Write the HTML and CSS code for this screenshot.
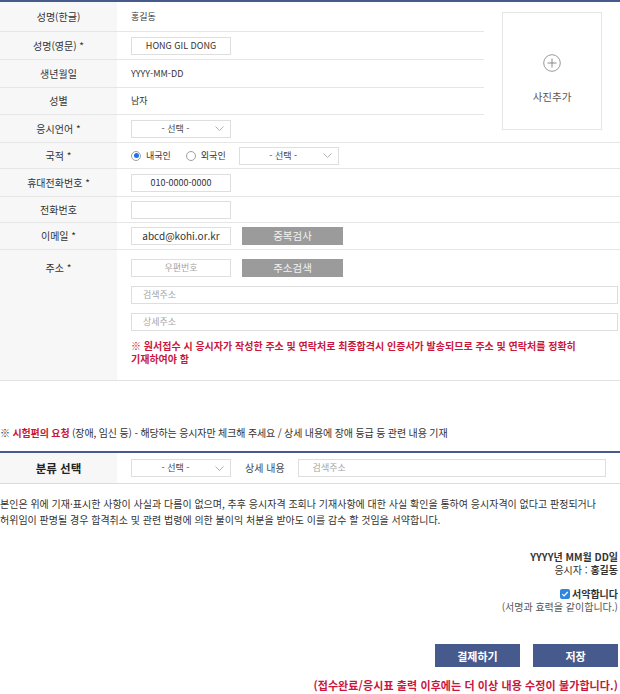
FILE: index.html
```html
<!DOCTYPE html>
<html lang="ko">
<head>
<meta charset="utf-8">
<title>응시원서</title>
<link rel="stylesheet" href="styles.css">
</head>
<body>
<div class="page">
  <div class="form">
    <div class="lb">성명(한글)</div>
    <div class="val">홍길동</div>
    <div class="photo">
      <div class="photo-box">
        <svg class="plus" width="18" height="18" viewBox="0 0 18 18"><circle cx="9" cy="9" r="8.3" fill="none" stroke="#9a9a9a" stroke-width="1"/><path d="M9 4.5v9M4.5 9h9" stroke="#8a8a8a" stroke-width="1" fill="none"/></svg>
        <span class="photo-text">사진추가</span>
      </div>
    </div>

    <div class="lb">성명(영문) *</div>
    <div class="val"><span class="inp">HONG GIL DONG</span></div>

    <div class="lb">생년월일</div>
    <div class="val">YYYY-MM-DD</div>

    <div class="lb">성별</div>
    <div class="val">남자</div>

    <div class="lb">응시언어 *</div>
    <div class="val">
      <span class="sel"><span class="sel-text">- 선택 -</span><svg class="chev" width="9" height="5" viewBox="0 0 9 5"><path d="M0.5 0.5l4 4 4-4" fill="none" stroke="#a8a8a8" stroke-width="0.9"/></svg></span>
    </div>

    <div class="lb">국적 *</div>
    <div class="val wide">
      <span class="radio on"></span><span class="radio-label">내국인</span>
      <span class="radio"></span><span class="radio-label last">외국인</span>
      <span class="sel sel-nat"><span class="sel-text">- 선택 -</span><svg class="chev" width="9" height="5" viewBox="0 0 9 5"><path d="M0.5 0.5l4 4 4-4" fill="none" stroke="#a8a8a8" stroke-width="0.9"/></svg></span>
    </div>

    <div class="lb">휴대전화번호 *</div>
    <div class="val wide"><span class="inp">010-0000-0000</span></div>

    <div class="lb">전화번호</div>
    <div class="val wide"><span class="inp"></span></div>

    <div class="lb">이메일 *</div>
    <div class="val wide"><span class="inp email">abcd@kohi.or.kr</span><span class="gbtn">중복검사</span></div>

    <div class="lb lb-top">주소 *</div>
    <div class="val wide addr">
      <div class="addr-row"><span class="inp ph">우편번호</span><span class="gbtn">주소검색</span></div>
      <span class="inp ph full">검색주소</span>
      <span class="inp ph full">상세주소</span>
      <p class="note">※ 원서접수 시 응시자가 작성한 주소 및 연락처로 최종합격시 인증서가 발송되므로 주소 및 연락처를 정확히<br>기재하여야 함</p>
    </div>
  </div>

  <p class="req">※ <strong class="red">시험편의 요청</strong> (장애, 임신 등) - 해당하는 응시자만 체크해 주세요 / 상세 내용에 장애 등급 등 관련 내용 기재</p>

  <div class="form2">
    <div class="lb2">분류 선택</div>
    <div class="val2">
      <span class="sel"><span class="sel-text">- 선택 -</span><svg class="chev" width="9" height="5" viewBox="0 0 9 5"><path d="M0.5 0.5l4 4 4-4" fill="none" stroke="#a8a8a8" stroke-width="0.9"/></svg></span>
      <span class="detail-label">상세 내용</span>
      <span class="inp ph detail">검색주소</span>
    </div>
  </div>

  <p class="oath">본인은 위에 기재·표시한 사항이 사실과 다름이 없으며, 추후 응시자격 조회나 기재사항에 대한 사실 확인을 통하여 응시자격이 없다고 판정되거나<br>허위임이 판명될 경우 합격취소 및 관련 법령에 의한 불이익 처분을 받아도 이를 감수 할 것임을 서약합니다.</p>

  <div class="sign">
    <p class="date">YYYY년 MM월 DD일</p>
    <p class="who">응시자 : <b>홍길동</b></p>
    <p class="agree"><span class="check"><svg width="8" height="8" viewBox="0 0 8 8"><path d="M1.3 4.2l1.8 1.8 3.6-4" fill="none" stroke="#fff" stroke-width="1.2"/></svg></span><b>서약합니다</b></p>
    <p class="sub">(서명과 효력을 같이합니다.)</p>
  </div>

  <div class="actions">
    <span class="btn">결제하기</span>
    <span class="btn">저장</span>
  </div>
  <p class="warn">(접수완료/응시표 출력 이후에는 더 이상 내용 수정이 불가합니다.)</p>
</div>
</body>
</html>
```
FILE: styles.css
```css
* { box-sizing: border-box; }
html, body { margin: 0; padding: 0; background: #fff; }
body {
  font-family: "Noto Sans CJK KR", "Noto Sans", sans-serif;
  font-size: 10px;
  color: #333;
  line-height: 14px;
}
p { margin: 0; }

.page { width: 620px; }

.form {
  display: grid;
  grid-template-columns: 117px 367px 136px;
  grid-template-rows: 30px 28px 28px 27px 28px 26px 28px 26px 27px 130px;
  border-top: 2px solid #465a8e;
  border-bottom: 1px solid #e2e2e2;
}
.lb {
  grid-column: 1;
  background: #f7f7f7;
  border-bottom: 1px solid #e6e6e6;
  display: flex;
  align-items: center;
  justify-content: center;
  color: #333;
}
.lb-top { align-items: flex-start; padding-top: 11px; border-bottom: 0; }
.val {
  grid-column: 2;
  border-bottom: 1px solid #e6e6e6;
  display: flex;
  align-items: center;
  padding-left: 14px;
  font-size: 9px;
}
.val.wide { grid-column: 2 / 4; }

.photo {
  grid-column: 3;
  grid-row: 1 / span 5;
  border-bottom: 1px solid #e6e6e6;
  padding: 10px 0 0 18px;
}
.photo-box {
  width: 100px;
  height: 118px;
  border: 1px solid #e6e6e6;
  display: flex;
  flex-direction: column;
  align-items: center;
  padding-top: 41px;
}
.plus { display: block; }
.photo-text { margin-top: 18px; font-size: 10.5px; color: #555; }

.inp {
  width: 100px;
  height: 18px;
  border: 1px solid #dedede;
  display: inline-flex;
  align-items: center;
  justify-content: center;
  color: #333;
  background: #fff;
  font-size: 9px;
}
.inp.email { font-size: 10px; }
.inp.ph { color: #a5a5a5; }
.inp.full { width: 487px; justify-content: flex-start; padding-left: 11px; }

.sel {
  width: 100px;
  height: 18px;
  border: 1px solid #dedede;
  display: inline-flex;
  align-items: center;
  padding-left: 4px;
  padding-right: 6px;
  background: #fff;
}
.sel-text { flex: 1; text-align: center; color: #444; font-size: 9px; }
.chev { display: block; }
.sel-nat { margin-left: 13px; }

.radio {
  width: 10px;
  height: 10px;
  border-radius: 50%;
  border: 1px solid #a0a0a0;
  background: #fff;
  display: inline-flex;
  align-items: center;
  justify-content: center;
}
.radio.on::after {
  content: "";
  width: 5px;
  height: 5px;
  border-radius: 50%;
  background: #1a73e8;
}
.radio-label { margin-left: 5px; margin-right: 15px; color: #333; font-size: 9px; }
.radio-label.last { margin-right: 0; }

.gbtn {
  width: 101px;
  height: 18px;
  margin-left: 11px;
  background: #9b9b9b;
  color: #f2f2f2;
  display: inline-flex;
  align-items: center;
  justify-content: center;
  font-size: 10.5px;
}

.addr {
  flex-direction: column;
  align-items: flex-start;
  padding-top: 9px;
  gap: 9px;
  border-bottom: 0;
}
.addr-row { display: flex; }
.note {
  margin-top: -1px;
  color: #c9163c;
  font-weight: bold;
  font-size: 10px;
  line-height: 13px;
}

.req { margin-top: 45px; line-height: 14px; color: #333; letter-spacing: -0.15px; }
.red { color: #c9163c; font-weight: bold; }

.form2 {
  margin-top: 11px;
  display: flex;
  height: 33px;
  border-top: 2px solid #465a8e;
  border-bottom: 1px solid #dcdcdc;
}
.lb2 {
  width: 117px;
  background: #f7f7f7;
  display: flex;
  align-items: center;
  justify-content: center;
  font-weight: bold;
  font-size: 11.5px;
  color: #222;
}
.val2 {
  flex: 1;
  display: flex;
  align-items: center;
  padding-left: 14px;
}
.detail-label { margin-left: 14px; font-size: 10px; color: #444; }
.inp.detail { width: 308px; margin-left: 13px; justify-content: flex-start; padding-left: 14px; }

.oath { margin-top: 12px; line-height: 16px; }

.sign {
  margin-top: 22px;
  padding-right: 2px;
  text-align: right;
  line-height: 13px;
}
.date { font-weight: bold; }
.agree {
  margin-top: 11px;
  display: flex;
  justify-content: flex-end;
  align-items: center;
}
.check {
  width: 10px;
  height: 10px;
  border-radius: 2px;
  background: #2f86de;
  display: inline-flex;
  align-items: center;
  justify-content: center;
  margin-right: 2px;
}
.check svg { display: block; }
.sub { color: #555; }

.actions {
  margin-top: 31px;
  padding-right: 2px;
  display: flex;
  justify-content: flex-end;
  gap: 13px;
}
.btn {
  width: 85px;
  height: 23px;
  background: #465a8e;
  color: #fff;
  font-weight: bold;
  font-size: 11px;
  display: inline-flex;
  align-items: center;
  justify-content: center;
}
.warn {
  margin-top: 11px;
  padding-right: 2px;
  text-align: right;
  color: #c9163c;
  font-weight: bold;
  font-size: 11px;
  letter-spacing: 0.1px;
  line-height: 14px;
}
```
